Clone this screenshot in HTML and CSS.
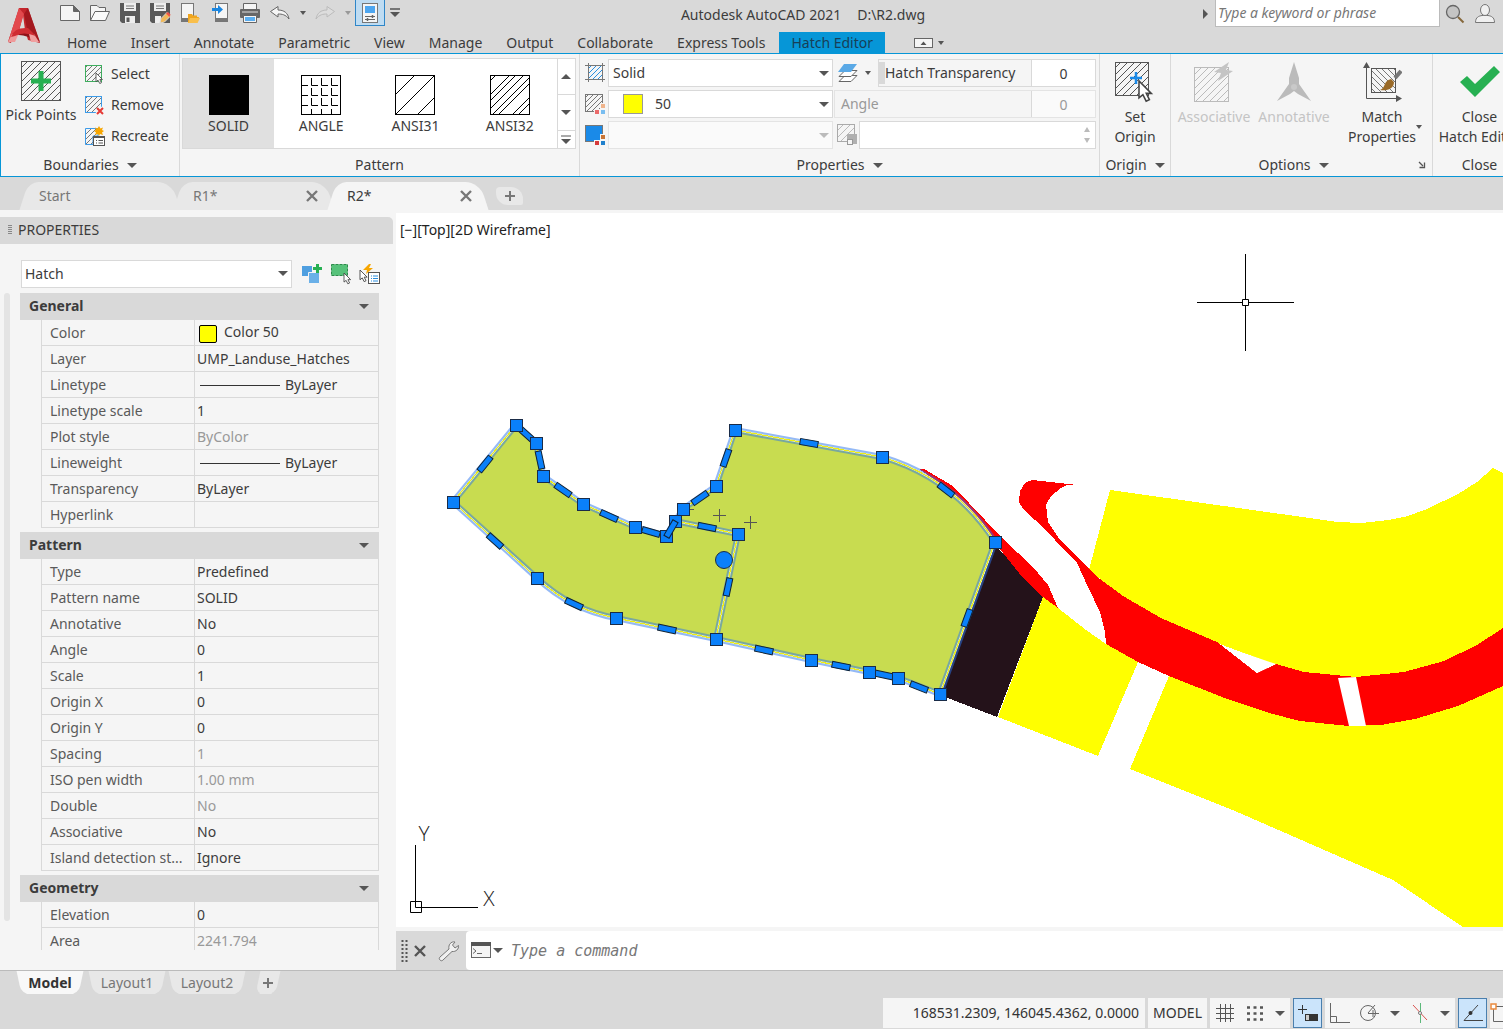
FILE: index.html
```html
<!DOCTYPE html>
<html lang="en">
<head>
<meta charset="utf-8">
<title>Autodesk AutoCAD 2021 - R2.dwg</title>
<link rel="stylesheet" href="styles.css">
</head>
<body>
<svg class="defs" width="0" height="0" aria-hidden="true">
  <defs>
    <pattern id="hatch" width="7" height="7" patternUnits="userSpaceOnUse"><path d="M-1 8L8-1M-1 1L1-1M6 8L8 6" stroke="#555" fill="none"/></pattern>
    <pattern id="hatch-fine" width="5" height="5" patternUnits="userSpaceOnUse"><path d="M-1 6L6-1M-1 1L1-1M4 6L6 4" stroke="#777" fill="none"/></pattern>
    <pattern id="hatch-blue" width="5" height="5" patternUnits="userSpaceOnUse"><path d="M-1 6L6-1M-1 1L1-1M4 6L6 4" stroke="#2a8fe0" fill="none"/></pattern>
    <pattern id="hatch-pale" width="7" height="7" patternUnits="userSpaceOnUse"><path d="M-1 8L8-1M-1 1L1-1M6 8L8 6" stroke="#bbb" fill="none"/></pattern>
    <pattern id="hatch-back" width="6" height="6" patternUnits="userSpaceOnUse"><path d="M-1-1L7 7M5-1L7 1M-1 5L1 7" stroke="#777" fill="none"/></pattern>
    <linearGradient id="red" x1="0" y1="0" x2="1" y2="1"><stop offset="0" stop-color="#e8474b"/><stop offset="1" stop-color="#a3151b"/></linearGradient>
    <path id="pointer" d="M0 0V13L3 10.500L5.500 15.500L8 14.300L5.600 9.500H9.500Z" fill="#fff" stroke="#444" stroke-width="1.200"/>
    <rect id="grip" x="-5.500" y="-5.500" width="12" height="12" fill="#0a80fa" stroke="#1a2c48"/>
    <rect id="bar" x="-9" y="-3" width="18" height="6" fill="#0a80fa" stroke="#123"/>
    <path id="outline" d="M516 425L536 443L543 476L583 504L635 527L666 536L675 521L683 509L716 486L735 430L882 457Q954 478 995 542L940 694L898 678L869 672L811 660L716 639L616 618Q571 610 537 578L453 502Z"/>
    <path id="divider" d="M675 521L738 534L716 639"/>
    <g id="edges"><use href="#outline"/><use href="#divider"/></g>
  </defs>
</svg>

<header class="header">
  <button class="logo" aria-label="Application menu">
    <svg width="34" height="37" viewBox="0 0 34 37"><path d="M12 1H21L33 36L21 33L18 23L16 8L12 24Q6 27 4 36L1 35Z" fill="#c3262c"/><path d="M12 1L1 35L5 27Q9 24 12 23L17 7Z" fill="#e2494d"/><path d="M17 7L21 1L33 35L26 29L20 22Z" fill="#a3181e"/><path d="M4 30Q14 22 27 27L31 35Q14 24 4 30Z" fill="#8f1218"/><path d="M5 27L1 35H8L12 26Z" fill="#ef9a9a"/><path d="M22 27L24 35H32L27 27Z" fill="#f0a0a0"/><path d="M4 30Q7 20 21 21L29 29Q16 24 8 29Z" fill="#cf2c32"/></svg>
  </button>
  <div class="titlebar">
    <div class="quick">
      <button class="qbtn" aria-label="New"><svg width="22" height="20" viewBox="0 0 22 20"><path d="M1.500 2.500H14.500L20.500 8.500V17.500H1.500Z" fill="#f5f5f5" stroke="#666"/><path d="M14.500 2.500V8.500H20.500Z" fill="#666" stroke="#666"/></svg></button>
      <button class="qbtn" aria-label="Open"><svg width="22" height="20" viewBox="0 0 22 20"><path d="M1.500 17.500V2.500H8L10 4.500H16.500V8" fill="#f5f5f5" stroke="#666"/><path d="M1.500 17.500L6 8.500H20.500L16.500 17.500Z" fill="#fafafa" stroke="#666"/></svg></button>
      <button class="qbtn" aria-label="Save"><svg width="22" height="22" viewBox="0 0 22 22"><path d="M1 1H21V21H3L1 19Z" fill="#595959"/><path d="M5 1H17V9H5Z" fill="#eee"/><path d="M7 4H15M7 6.500H15" stroke="#777"/><path d="M6 14H16V21H6Z" fill="#eee"/><path d="M7.500 15.500H10.500V20H7.500Z" fill="#595959"/></svg></button>
      <button class="qbtn" aria-label="Save as"><svg width="22" height="22" viewBox="0 0 22 22"><path d="M1 1H21V21H3L1 19Z" fill="#595959"/><path d="M5 1H17V9H5Z" fill="#eee"/><path d="M7 4H15M7 6.500H15" stroke="#777"/><path d="M6 14H12V21H6Z" fill="#eee"/><path d="M11 21L12 16.500L18 10.500L21.500 14L15.500 20Z" fill="#f0b95a" stroke="#d9d9d9"/><path d="M17 11.500L19 10L21.500 12.500L20.500 15Z" fill="#ee5548"/></svg></button>
      <button class="qbtn" aria-label="Open from web"><svg width="22" height="22" viewBox="0 0 22 22"><rect x="2.500" y="1.500" width="12" height="18" fill="#f5f5f5" stroke="#777"/><path d="M3 16H14V19.500H3Z" fill="#777"/><path d="M9 21V12H13L14 13.500H18V15H20L18 21Z" fill="#f0a51e"/><path d="M11 16H21L18.500 21H9Z" fill="#f9bf4c"/></svg></button>
      <button class="qbtn" aria-label="Save to web"><svg width="22" height="22" viewBox="0 0 22 22"><rect x="6.500" y="1.500" width="12" height="18" fill="#f5f5f5" stroke="#777"/><path d="M7 16H18V19.500H7Z" fill="#777"/><path d="M3 6H9V3L14 7.500L9 12V9H3Z" fill="#1a86e0"/></svg></button>
      <button class="qbtn" aria-label="Plot"><svg width="22" height="20" viewBox="0 0 22 20"><path d="M4.500 0.500H17.500V7H4.500Z" fill="#f5f5f5" stroke="#666"/><rect x="1" y="6" width="20" height="9" rx="1" fill="#666"/><path d="M3 9H19" stroke="#ddd"/><path d="M4.500 12.500H17.500V19.500H4.500Z" fill="#f5f5f5" stroke="#666"/><path d="M6 14H16V18H6Z" fill="#5aaef0"/></svg></button>
      <button class="qbtn" aria-label="Undo"><svg width="22" height="16" viewBox="0 0 22 16"><path d="M1.500 6.500L9 1.500V5C15 5 19 8 20 14C16.500 9.500 13 9 9 9V12Z" fill="#f5f5f5" stroke="#666"/></svg></button>
      <button class="qcaret" aria-label="Undo list"><i class="caret small"></i></button>
      <button class="qbtn" aria-label="Redo"><svg width="22" height="16" viewBox="0 0 22 16"><path d="M20.500 6.500L13 1.500V5C7 5 3 8 2 14C5.500 9.500 9 9 13 9V12Z" fill="#ddd" stroke="#bbb"/></svg></button>
      <button class="qcaret" aria-label="Redo list"><i class="caret small dim"></i></button>
      <button class="qbtn on" aria-label="Properties"><svg width="18" height="22" viewBox="0 0 18 22"><rect x="1.500" y="1.500" width="15" height="19" fill="#f5f5f5" stroke="#777"/><path d="M4 4H14V11H4Z" fill="#4da6f0"/><path d="M4 14.500H14M4 17.500H14" stroke="#666"/><path d="M11.500 13V16M6.500 16V19" stroke="#666" stroke-width="1.500"/></svg></button>
      <button class="qmore" aria-label="Customize toolbar"><svg width="12" height="10" viewBox="0 0 12 10"><path d="M1 1H11" stroke="#555" stroke-width="1.500"/><path d="M1 4H11L6 9Z" fill="#555"/></svg></button>
    </div>
    <h1 class="title"><span>Autodesk AutoCAD 2021</span><span>D:\R2.dwg</span></h1>
    <div class="help">
      <i class="caret right"></i>
      <input class="search" type="search" placeholder="Type a keyword or phrase" aria-label="Search help">
      <button class="hbtn" aria-label="Search"><svg width="20" height="20" viewBox="0 0 20 20"><path d="M13 13L18.500 18.500" stroke="#86683c" stroke-width="2"/><circle cx="8" cy="8" r="6.500" fill="#c4c4c4" stroke="#666" stroke-width="1.300"/></svg></button>
      <button class="hbtn" aria-label="Sign in"><svg width="22" height="20" viewBox="0 0 22 20"><path d="M1.500 18.500C1.500 13 5 12 8 11.500H14C17 12 20.500 13 20.500 18.500Z" fill="#f0f0f0" stroke="#777"/><ellipse cx="11" cy="6" rx="4.500" ry="5.500" fill="#f0f0f0" stroke="#777"/></svg></button>
    </div>
  </div>
  <nav class="tabs">
    <a href="#home">Home</a><a href="#insert">Insert</a><a href="#annotate">Annotate</a><a href="#parametric">Parametric</a><a href="#view">View</a><a href="#manage">Manage</a><a href="#output">Output</a><a href="#collaborate">Collaborate</a><a href="#express">Express Tools</a><a class="current" href="#hatch">Hatch Editor</a>
    <button class="mini" aria-label="Minimize ribbon"><svg width="30" height="12" viewBox="0 0 30 12"><rect x=".5" y="1.500" width="18" height="9" fill="#f5f5f5" stroke="#666"/><path d="M6.500 8L9.500 4.500L12.500 8ZM24 4H30L27 8Z" fill="#555"/></svg></button>
  </nav>
</header>

<main class="ribbon">
  <section class="panel boundaries">
    <div class="body">
      <button class="big"><svg width="40" height="40" viewBox="0 0 40 40"><rect x=".5" y=".5" width="39" height="39" fill="url(#hatch)" stroke="#555"/><path d="M20 10V30M10 20H30" stroke="#27b052" stroke-width="5"/></svg><span>Pick Points</span></button>
      <div class="stack">
        <button><svg width="22" height="20" viewBox="0 0 22 20"><rect x="1.500" y="1.500" width="16" height="16" fill="url(#hatch-fine)" stroke="#3fae5f"/><use href="#pointer" transform="translate(12 9) scale(.68)"/></svg>Select</button>
        <button><svg width="22" height="20" viewBox="0 0 22 20"><rect x="1.500" y="1.500" width="16" height="16" fill="url(#hatch-fine)" stroke="#3d9be8"/><path d="M13 13L19 19M19 13L13 19" stroke="#f5f5f5" stroke-width="4"/><path d="M13 13L19 19M19 13L13 19" stroke="#e53935" stroke-width="2"/></svg>Remove</button>
        <button><svg width="22" height="20" viewBox="0 0 22 20"><path d="M1.500 18.500V2.500H14V10H9V18.500Z" fill="url(#hatch-fine)" stroke="#3d9be8"/><path d="M15 0L16.500 2.500L19 1.500L18 4L20 5L18 6.500L19 9L16 8L15 10L14 8L11 9L12 6.500L10 5L12 4L11 1.500L13.500 2.500Z" fill="#f7a600"/><rect x="9.500" y="10.500" width="11" height="9" fill="#fff" stroke="#555"/><path d="M9 11.500H21M12 14.500H13M14.500 14.500H19M12 17H13M14.500 17H19" stroke="#555"/></svg>Recreate</button>
      </div>
    </div>
    <h2>Boundaries <i class="caret"></i></h2>
  </section>

  <section class="panel pattern">
    <div class="gallery">
      <button class="cell picked"><svg width="40" height="40"><rect width="40" height="40"/></svg>SOLID</button>
      <button class="cell"><svg width="40" height="40" viewBox="0 0 40 40"><rect x=".5" y=".5" width="39" height="39" fill="#fff" stroke="#000"/><path d="M0 10.500H7M10.500 3V10.500H17M20.500 3V10.500H27M30.500 3V10.500H37M0 20.500H7M10.500 13V20.500H17M20.500 13V20.500H27M30.500 13V20.500H37M0 30.500H7M10.500 23V30.500H17M20.500 23V30.500H27M30.500 23V30.500H37M10.500 34V40M20.500 34V40M30.500 34V40" fill="none" stroke="#000"/></svg>ANGLE</button>
      <button class="cell"><svg width="40" height="40" viewBox="0 0 40 40"><rect x=".5" y=".5" width="39" height="39" fill="#fff" stroke="#000"/><path d="M0 20L20 0M0 40L40 0M22 40L40 22" stroke="#000"/></svg>ANSI31</button>
      <button class="cell"><svg width="40" height="40" viewBox="0 0 40 40"><rect x=".5" y=".5" width="39" height="39" fill="#fff" stroke="#000"/><path d="M0 6L6 0M0 20L20 0M0 26L26 0M0 34L34 0M2 40L40 2M8 40L40 8M22 40L40 22M28 40L40 28" stroke="#000"/></svg>ANSI32</button>
      <div class="scroller">
        <button aria-label="Scroll up"><i class="caret up"></i></button>
        <button aria-label="Scroll down"><i class="caret"></i></button>
        <button aria-label="More patterns"><svg width="12" height="9" viewBox="0 0 12 9"><path d="M1 1H11" stroke="#555"/><path d="M1 4H11L6 9Z" fill="#555"/></svg></button>
      </div>
    </div>
    <h2>Pattern</h2>
  </section>

  <section class="panel props">
    <div class="fields">
      <svg width="22" height="22" viewBox="0 0 22 22"><rect x="4" y="4" width="14" height="14" fill="url(#hatch-blue)"/><path d="M0 3.500H20M0 17.500H20M3.500 1V20M17.500 1V20" stroke="#777"/></svg>
      <span class="combo"><select aria-label="Hatch type"><option>Solid</option></select></span>
      <div class="wide">
        <button class="layers" aria-label="Hatch layer"><svg width="22" height="20" viewBox="0 0 22 20"><path d="M2 18.500L8 12.500H20L14 18.500Z" fill="#fff" stroke="#666"/><path d="M2 13.500L8 7.500H20L14 13.500Z" fill="#fff" stroke="#666"/><path d="M1 9L7 1H20L14 9Z" fill="#5aa9e6"/></svg><i class="caret small"></i></button>
        <label class="slider"><i class="thumb"></i><span>Hatch Transparency</span><input value="0"></label>
      </div>
      <svg width="22" height="22" viewBox="0 0 22 22"><rect x=".5" y="1.500" width="17" height="17" fill="url(#hatch-fine)" stroke="#777"/><path d="M15 10H21V16H15ZM9 16H21V22H9Z" fill="#f5f5f5"/><path d="M16 11H20V15H16Z" fill="#f0b48c"/><path d="M10 17H14V21H10Z" fill="#ea6a6a"/><path d="M16 17H20V21H16Z" fill="#78bdf0"/></svg>
      <span class="combo"><i class="swatch"></i><select aria-label="Hatch color"><option>50</option></select></span>
      <label class="slider off"><span>Angle</span><input value="0" disabled></label>
      <svg width="22" height="22" viewBox="0 0 22 22"><rect x=".5" y="1.500" width="17" height="16" fill="#1a8ae8" stroke="#777"/><path d="M15 10H21V16H15ZM9 16H21V22H9Z" fill="#f5f5f5"/><path d="M16 11H20V15H16Z" fill="#c87434"/><path d="M10 17H14V21H10Z" fill="#d63a3a"/><path d="M16 17H20V21H16Z" fill="#1f80cc"/></svg>
      <span class="combo off"><select aria-label="Background color" disabled><option></option></select></span>
      <div class="wide">
        <svg width="22" height="22" viewBox="0 0 22 22"><rect x=".5" y=".5" width="17" height="17" fill="url(#hatch-pale)" stroke="#aaa"/><path d="M10 10H20V20H10Z" fill="#b0b0b0"/><rect x="10.500" y="15.500" width="5" height="5" fill="#f5f5f5" stroke="#999"/></svg>
        <span class="spin"><input aria-label="Hatch scale" disabled><span class="arrows"><i class="caret up tiny"></i><i class="caret tiny"></i></span></span>
      </div>
    </div>
    <h2>Properties <i class="caret"></i></h2>
  </section>

  <section class="panel origin">
    <div class="body">
      <button class="big"><svg width="40" height="42" viewBox="0 0 40 42"><rect x=".5" y="1.500" width="33" height="33" fill="url(#hatch)" stroke="#555"/><path d="M21 11V23M15 17H27" stroke="#1a8ae8" stroke-width="2.500"/><use href="#pointer" transform="translate(24 20) scale(1.300)"/></svg><span>Set<br>Origin</span></button>
    </div>
    <h2>Origin <i class="caret"></i></h2>
  </section>

  <section class="panel options">
    <div class="body">
      <button class="big" disabled><svg width="40" height="42" viewBox="0 0 40 42"><rect x=".5" y="6.500" width="34" height="34" fill="url(#hatch-pale)" stroke="#bbb"/><path d="M35 1L20 11L27 12L24 20L39 10L32 9Z" fill="#c4c4c4"/></svg><span>Associative</span></button>
      <button class="big" disabled><svg width="40" height="42" viewBox="0 0 40 42"><path d="M20 1L25 17V23L37 40L24 33L20 30L16 33L3 40L15 23V17Z" fill="#bbb"/><circle cx="20" cy="26" r="3" fill="#c9c9c9"/></svg><span>Annotative</span></button>
      <button class="big"><svg width="40" height="42" viewBox="0 0 40 42"><path d="M4.500 4V37.500H36" fill="none" stroke="#555"/><path d="M1 7L4.500 1L8 7ZM34 34L40 37.500L34 41Z" fill="#555"/><rect x="9.500" y="7.500" width="24" height="24" fill="url(#hatch-back)" stroke="#555"/><path d="M39 10L33 17" stroke="#777" stroke-width="4"/><path d="M18 29C24 27 21 20 29 18L32 21C32 28 25 30 18 29Z" fill="#9a6a28"/></svg><span>Match<br>Properties</span><i class="caret small"></i></button>
    </div>
    <h2>Options <i class="caret"></i></h2>
    <button class="launcher" aria-label="Hatch settings"><svg width="8" height="8" viewBox="0 0 8 8"><path d="M1 1L5 5M6.500 1.500V6.500H1.500" fill="none" stroke="#555" stroke-width="1.300"/></svg></button>
  </section>

  <section class="panel close">
    <div class="body">
      <button class="big"><svg width="40" height="42" viewBox="0 0 40 42"><path d="M0 21L7 15L15 23L34 5L40 11L15 36Z" fill="#27b052"/></svg><span>Close<br>Hatch Editor</span></button>
    </div>
    <h2>Close</h2>
  </section>
</main>

<nav class="files">
  <a class="file" href="#start">Start</a>
  <a class="file" href="#r1">R1*<svg class="x" width="12" height="12" viewBox="0 0 12 12"><path d="M1 1L11 11M11 1L1 11" stroke="#777" stroke-width="2.400"/></svg></a>
  <a class="file current" href="#r2">R2*<svg class="x" width="12" height="12" viewBox="0 0 12 12"><path d="M1 1L11 11M11 1L1 11" stroke="#777" stroke-width="2.400"/></svg></a>
  <button class="add" aria-label="New drawing"><svg width="12" height="12" viewBox="0 0 12 12"><path d="M6 1V11M1 6H11" stroke="#777" stroke-width="2"/></svg></button>
</nav>

<div class="work">
  <aside class="palette">
    <h2 class="palette-title"><i class="grain"></i>PROPERTIES</h2>
    <div class="picker">
      <span class="combo"><select aria-label="Object type"><option>Hatch</option></select></span>
      <button aria-label="Toggle PICKADD"><svg width="22" height="22" viewBox="0 0 22 22"><path d="M1 3H11V13H1Z" fill="#4f9fe0"/><path d="M7.500 9.500H18.500V20.500H7.500Z" fill="#6ab0e8" stroke="#f5f5f5"/><path d="M16.500 1V10M12 5.500H21" stroke="#27b052" stroke-width="3"/></svg></button>
      <button aria-label="Select objects"><svg width="22" height="22" viewBox="0 0 22 22"><path d="M1.500 1.500H17.500V12.500H1.500Z" fill="#57c27a" stroke="#2c8c4a" stroke-dasharray="3 1"/><use href="#pointer" transform="translate(14 10) scale(.7)"/></svg></button>
      <button aria-label="Quick select"><svg width="22" height="22" viewBox="0 0 22 22"><path d="M10 1L4 7L8 7L7 11L14 5L10 5L12 1Z" fill="#f7a600"/><use href="#pointer" transform="translate(1 7) scale(.75)"/><rect x="9.500" y="9.500" width="11" height="11" fill="#fff" stroke="#555"/><path d="M12 13H13M14 13H19M12 15.500H13M14 15.500H19M12 18H13M14 18H19" stroke="#2a8fe0"/></svg></button>
    </div>
    <div class="list">
      <i class="track"></i>
      <div class="groups">
        <section>
          <h3>General <i class="caret"></i></h3>
          <table>
            <tr><th>Color</th><td><i class="chip"></i>Color 50</td></tr>
            <tr><th>Layer</th><td>UMP_Landuse_Hatches</td></tr>
            <tr><th>Linetype</th><td><i class="rule"></i>ByLayer</td></tr>
            <tr><th>Linetype scale</th><td>1</td></tr>
            <tr><th>Plot style</th><td class="dim">ByColor</td></tr>
            <tr><th>Lineweight</th><td><i class="rule"></i>ByLayer</td></tr>
            <tr><th>Transparency</th><td>ByLayer</td></tr>
            <tr><th>Hyperlink</th><td></td></tr>
          </table>
        </section>
        <section>
          <h3>Pattern <i class="caret"></i></h3>
          <table>
            <tr><th>Type</th><td>Predefined</td></tr>
            <tr><th>Pattern name</th><td>SOLID</td></tr>
            <tr><th>Annotative</th><td>No</td></tr>
            <tr><th>Angle</th><td>0</td></tr>
            <tr><th>Scale</th><td>1</td></tr>
            <tr><th>Origin X</th><td>0</td></tr>
            <tr><th>Origin Y</th><td>0</td></tr>
            <tr><th>Spacing</th><td class="dim">1</td></tr>
            <tr><th>ISO pen width</th><td class="dim">1.00 mm</td></tr>
            <tr><th>Double</th><td class="dim">No</td></tr>
            <tr><th>Associative</th><td>No</td></tr>
            <tr><th>Island detection st...</th><td>Ignore</td></tr>
          </table>
        </section>
        <section>
          <h3>Geometry <i class="caret"></i></h3>
          <table>
            <tr><th>Elevation</th><td>0</td></tr>
            <tr><th>Area</th><td class="dim">2241.794</td></tr>
          </table>
        </section>
      </div>
    </div>
  </aside>

  <div class="stage">
    <div class="canvas">
      <svg class="drawing" width="100%" height="100%">
        <g transform="translate(-396 -213)">
          <g fill="#ff0" shape-rendering="crispEdges">
            <path d="M1043 597L998 717L1098 756L1138 662L1106 644L1086 630L1058 608Z"/>
            <path d="M1110 490L1338 522L1361 523L1388 520L1408 516L1427 509L1458 494L1477 482L1493 468L1503 473V630L1477 646L1444 662L1404 673L1356 678L1304 673L1276 665L1217 643L1161 619L1123 597L1089 570Z"/>
            <path d="M1169 676L1227 699L1349 725L1415 719L1503 686V927H1463L1393 880L1235 811L1130 769Z"/>
          </g>
          <path d="M995 545L940 695L997 717L1043 597Z" fill="#24121a" shape-rendering="crispEdges"/>
          <g fill="#f00" shape-rendering="crispEdges">
            <path d="M919 469L924 469L953 486L1002 538L1033 567L1048 585L1058 608L1043 597L1023 578L999 548L988 531L973 513L954 493Z"/>
            <path d="M1077 485L1032 480L1025 483L1020 491L1019 502L1023 509L1046 530L1065 551L1077 563L1088 587L1100 612L1105 632L1106 644L1138 662L1169 676L1227 699L1273 714L1300 721L1349 726L1381 725L1415 719L1458 706L1503 686V628L1477 645L1444 661L1404 672L1356 677L1304 672L1276 664L1257 673L1217 642L1161 618L1123 596L1096 576L1077 557L1058 537L1048 522L1046 505L1051 496L1061 488L1067 485Z"/>
          </g>
          <path d="M1223 646L1276 664L1257 673ZM1338 678L1356 677L1366 726H1349Z" fill="#fff"/>
          <use href="#outline" fill="#c8dc50"/>
          <g fill="none">
            <use href="#edges" stroke="#2a74ee" stroke-opacity=".5" stroke-width="6"/>
            <use href="#edges" stroke="#dfeac0" stroke-width="2"/>
            <use href="#edges" stroke="#eeee10" shape-rendering="crispEdges"/>
          </g>
          <path d="M713 515.500H726M719.500 509V522M744 522.500H757M750.500 516V529M687 509.500H694" stroke="#555"/>
          <g>
            <use href="#bar" transform="translate(485 464) rotate(-51)"/><use href="#bar" transform="translate(495 541) rotate(42)"/>
            <use href="#bar" transform="translate(574 604) rotate(25)"/><use href="#bar" transform="translate(667 629) rotate(12)"/>
            <use href="#bar" transform="translate(764 650) rotate(12)"/><use href="#bar" transform="translate(841 666) rotate(11)"/>
            <use href="#bar" transform="translate(884 675) rotate(12)"/><use href="#bar" transform="translate(919 687) rotate(21)"/>
            <use href="#bar" transform="translate(967 618) rotate(-70)"/><use href="#bar" transform="translate(946 490) rotate(38)"/>
            <use href="#bar" transform="translate(809 443) rotate(10)"/><use href="#bar" transform="translate(726 458) rotate(-71)"/>
            <use href="#bar" transform="translate(700 498) rotate(-35)"/><use href="#bar" transform="translate(651 532) rotate(16)"/>
            <use href="#bar" transform="translate(609 516) rotate(24)"/><use href="#bar" transform="translate(563 490) rotate(35)"/>
            <use href="#bar" transform="translate(540 460) rotate(78)"/><use href="#bar" transform="translate(526 434) rotate(42)"/>
            <use href="#bar" transform="translate(707 527) rotate(11)"/><use href="#bar" transform="translate(728 587) rotate(-78)"/>
          </g>
          <g shape-rendering="crispEdges">
            <use href="#grip" x="516" y="425"/><use href="#grip" x="536" y="443"/><use href="#grip" x="543" y="476"/><use href="#grip" x="583" y="504"/>
            <use href="#grip" x="635" y="527"/><use href="#grip" x="666" y="536"/><use href="#grip" x="675" y="521"/><use href="#grip" x="683" y="509"/>
            <use href="#grip" x="716" y="486"/><use href="#grip" x="735" y="430"/><use href="#grip" x="882" y="457"/><use href="#grip" x="995" y="542"/>
            <use href="#grip" x="940" y="694"/><use href="#grip" x="898" y="678"/><use href="#grip" x="869" y="672"/><use href="#grip" x="811" y="660"/>
            <use href="#grip" x="716" y="639"/><use href="#grip" x="616" y="618"/><use href="#grip" x="537" y="578"/><use href="#grip" x="453" y="502"/>
            <use href="#grip" x="738" y="534"/>
          </g>
          <use href="#bar" transform="translate(671 529) rotate(-60)"/>
          <circle cx="724" cy="560" r="8.500" fill="#0a80fa" stroke="#1a2c48"/>
          <path d="M1197 302.500H1242M1249 302.500H1294M1245.500 254V299M1245.500 306V351M1242.500 299.500H1248.500V305.500H1242.500Z" fill="none" stroke="#000"/>
          <path d="M415.500 845V907.500H478M410.500 901.500H421.500V912.500H410.500Z" fill="none" stroke="#000"/>
          <text class="axis" x="424" y="841">Y</text>
          <text class="axis" x="489" y="906">X</text>
        </g>
      </svg>
      <span class="viewlabel">[−][Top][2D Wireframe]</span>
    </div>
    <div class="command">
      <div class="cmdtools">
        <svg width="7" height="22" viewBox="0 0 7 22"><path d="M1.500 0V22M5.500 0V22" stroke="#555" stroke-width="2" stroke-dasharray="2 2"/></svg>
        <button aria-label="Close command line"><svg width="12" height="12" viewBox="0 0 12 12"><path d="M1 1L11 11M11 1L1 11" stroke="#555" stroke-width="2.400"/></svg></button>
        <button aria-label="Customize"><svg width="22" height="22" viewBox="0 0 22 22"><path d="M2 20C1 19 1 18 2 17L11 9C10 5 13 1 17 2L14.500 5L17 8L20.500 5.500C21 9 18 12 14 11.500L5 20C4 21 3 21 2 20Z" fill="#f0f0f0" stroke="#777"/></svg></button>
      </div>
      <label class="prompt">
        <svg width="20" height="17" viewBox="0 0 20 17"><rect x=".5" y=".5" width="19" height="15" fill="#f5f5f5" stroke="#666"/><path d="M0 0H20V4H0Z" fill="#555"/><path d="M2 6.500L5 9L2 11.500M6 11.500H11" fill="none" stroke="#666"/></svg>
        <i class="caret"></i>
        <input placeholder="Type a command" aria-label="Command">
      </label>
    </div>
  </div>
</div>

<footer class="footer">
  <nav class="layouts">
    <a class="layout current" href="#model">Model</a><a class="layout" href="#layout1">Layout1</a><a class="layout" href="#layout2">Layout2</a>
    <button class="layout plus" aria-label="New layout"><svg width="10" height="10" viewBox="0 0 10 10"><path d="M5 0V10M0 5H10" stroke="#777" stroke-width="2"/></svg></button>
  </nav>
  <div class="status">
    <span class="coords">168531.2309, 146045.4362, 0.0000</span>
    <button class="space">MODEL</button>
    <div class="toggles">
      <button aria-label="Grid"><svg width="20" height="20" viewBox="0 0 20 20"><path d="M5.500 1V19M10.500 1V19M15.500 1V19M1 5.500H19M1 10.500H19M1 15.500H19" stroke="#555"/></svg></button>
      <button aria-label="Snap"><svg width="16" height="16" viewBox="0 0 16 16"><path d="M0 2.500H16M0 8.500H16M0 14.500H16" stroke="#555" stroke-width="2.500" stroke-dasharray="3 3.500"/></svg></button>
      <button class="narrow" aria-label="Snap settings"><i class="caret"></i></button>
    </div>
    <button class="lit" aria-label="Dynamic input"><svg width="22" height="20" viewBox="0 0 22 20"><path d="M5.500 2V11M1 6.500H10" stroke="#333"/><rect x="8.500" y="11.500" width="12" height="6" fill="#333" stroke="#333"/><path d="M9 12H12V17H9Z" fill="#ccc"/></svg></button>
    <div class="toggles">
      <button aria-label="Ortho"><svg width="20" height="20" viewBox="0 0 20 20"><path d="M.5 0V19.500H20M.500 13.500H6.500V19" fill="none" stroke="#666"/></svg></button>
      <button aria-label="Polar tracking"><svg width="22" height="20" viewBox="0 0 22 20"><circle cx="9" cy="10" r="7.500" fill="none" stroke="#666"/><path d="M9 10.500H20M9 10L16 2M14 7V14" stroke="#666"/></svg></button>
      <button class="narrow" aria-label="Polar settings"><i class="caret"></i></button>
      <button aria-label="Isometric drafting"><svg width="20" height="20" viewBox="0 0 20 20"><path d="M3 2L17 17" stroke="#d9534f"/><path d="M10.500 0V20" stroke="#5cb87a"/><circle cx="10" cy="10" r="1.500" fill="#fff" stroke="#777"/></svg></button>
      <button class="narrow" aria-label="Isometric settings"><i class="caret"></i></button>
    </div>
    <button class="lit" aria-label="Object snap tracking"><svg width="22" height="20" viewBox="0 0 22 20"><path d="M16 2L2 17.500H21" fill="none" stroke="#444"/><circle cx="8.500" cy="10" r="2" fill="#333"/></svg></button>
    <button class="last" aria-label="Object snap"><svg width="20" height="20" viewBox="0 0 20 20"><path d="M3.500 6V18.500H20M6 3.500H20" fill="none" stroke="#666"/><rect x="1" y="1" width="5" height="5" fill="#fff" stroke="#ea8a3e" stroke-width="1.500"/></svg></button>
  </div>
</footer>
</body>
</html>
```
FILE: styles.css
```css
* { box-sizing: border-box; }
body {
  margin: 0;
  min-height: 100vh;
  display: flex;
  flex-direction: column;
  overflow: hidden;
  background: #d9d9d9;
  color: #3c3c3c;
  font: 14px/20px "Noto Sans", "Open Sans", sans-serif;
}
.defs { position: absolute; }
svg { flex: none; display: block; }
button, input, select { font: inherit; color: inherit; background: none; border: 0; margin: 0; padding: 0; border-radius: 0; }
button { display: flex; align-items: center; justify-content: center; }
input, select { min-width: 0; outline: 0; appearance: none; }
a { color: inherit; text-decoration: none; }
h1, h2, h3 { margin: 0; font: inherit; }
select:disabled { opacity: 1; }

/* little triangles */
.caret { flex: none; width: 0; height: 0; border-style: solid; border-width: 5px 5px 0; border-color: #555 transparent transparent; }
.caret.small { border-width: 4px 3px 0; }
.caret.tiny { border-width: 5px 3px 0; border-top-color: #bbb; }
.caret.up { border-width: 0 5px 5px; border-color: transparent transparent #555; }
.caret.up.tiny { border-width: 0 3px 5px; border-bottom-color: #bbb; }
.caret.right { border-width: 5px 0 5px 5px; border-color: transparent transparent transparent #555; }
.caret.dim { border-top-color: #999; }

/* title bar and ribbon tabs */
.header { display: grid; grid-template: 28px 25px / 55px minmax(0, 1fr); }
.logo { grid-row: 1 / 3; padding: 0 7px 3px 0; }
.titlebar { display: flex; }
.quick { display: flex; height: 26px; }
.qbtn { width: 30px; }
.qcaret { width: 15px; }
.qmore { width: 20px; }
.qbtn.on { background: #bfdcf2; border: 1px solid #2f86c8; border-top: 0; }
.title { flex: 1; display: flex; justify-content: center; gap: 16px; padding: 5px 2px 0 0; white-space: nowrap; }
.help { display: flex; align-items: center; width: 300px; height: 27px; }
.help .caret { margin-right: 7px; }
.search { width: 225px; height: 27px; background: #fff; border: 1px solid #bbb; border-top: 0; padding: 0 3px 2px 2px; font-style: italic; }
.search::placeholder { color: #777; opacity: 1; }
.hbtn { width: 30px; }
.tabs { display: flex; align-items: flex-end; }
.tabs a { padding: 1px 12px 0; height: 21px; white-space: nowrap; }
.tabs .current { background: #0696d7; color: #173f57; padding: 1px 12px 0; margin-left: 2px; }
.mini { height: 21px; margin-left: 29px; }

/* ribbon */
.ribbon { display: flex; height: 124px; background: #f5f5f5; border: solid #0696d7; border-width: 1px 0 1px 1px; overflow: hidden; }
.panel { flex: none; display: flex; flex-direction: column; position: relative; border-right: 1px solid #d9d9d9; }
.panel h2 { margin-top: auto; height: 22px; display: flex; align-items: center; justify-content: center; gap: 8px; }
.boundaries { width: 179px; }
.pattern { width: 400px; }
.props { width: 520px; }
.origin { width: 71px; }
.options { width: 262px; }
.close { width: 94px; }
.body { display: flex; justify-content: center; }
.big { flex-direction: column; width: 80px; height: 92px; justify-content: flex-start; padding-top: 7px; gap: 4px; white-space: nowrap; position: relative; }
.big:disabled { color: #c4c4c4; }
.big .caret { position: absolute; right: 0; bottom: 17px; }
.options .body { justify-content: flex-start; padding-left: 3px; }
.options .big:last-child { margin-left: 8px; }
.options h2 { padding-right: 16px; }
.stack { flex: 1; padding: 4px 0 0 3px; }
.stack button { height: 31px; gap: 5px; }
.launcher { position: absolute; right: 6px; bottom: 7px; }

.gallery { display: flex; height: 91px; margin: 4px 3px 0 2px; background: #fff; border: 1px solid #d9d9d9; }
.cell { flex: 1 1 0; flex-direction: column; gap: 1px; padding-top: 3px; }
.cell.picked { flex: 0 0 91px; background: #e0e0e0; }
.scroller { width: 18px; display: grid; grid-template-rows: 35px 36px 1fr; border-left: 1px solid #d9d9d9; }
.scroller button + button { border-top: 1px solid #d9d9d9; }

.fields { display: grid; grid-template: repeat(3, 28px) / 22px 225px minmax(0, 1fr); gap: 3px 1px; padding: 5px 3px 0 5px; align-items: center; }
.combo { height: 28px; display: flex; align-items: center; background: #fff; border: 1px solid #d9d9d9; position: relative; }
.combo select { flex: 1; height: 100%; padding: 0 4px; }
.combo::after { content: ""; position: absolute; right: 3px; border: 5px solid transparent; border-top-color: #555; border-bottom: 0; pointer-events: none; }
.combo.off { background: #fafafa; border-color: #e4e4e4; }
.combo.off::after { border-top-color: #bbb; }
.swatch { width: 20px; height: 20px; margin: 0 8px 0 14px; background: #ff0; border: 1px solid #999; }
.wide { display: flex; align-items: center; gap: 2px; padding-left: 3px; }
.wide > svg { margin-right: -2px; }
.layers { gap: 6px; margin-right: 5px; }
.slider { flex: 1; display: flex; align-items: center; height: 28px; border: 1px solid #d9d9d9; white-space: nowrap; }
.slider span { flex: 1; }
.slider input { width: 64px; height: 100%; text-align: center; background: #fff; border-left: 1px solid #d9d9d9; }
.thumb { width: 6px; height: 22px; background: #d9d9d9; }
.slider.off { color: #999; border-color: #e4e4e4; padding-left: 6px; }
.slider.off input { background: #fafafa; }
.spin { flex: 1; display: flex; height: 28px; background: #fff; border: 1px solid #d9d9d9; }
.spin input { flex: 1; }
.arrows { display: flex; flex-direction: column; justify-content: center; gap: 6px; padding-right: 5px; }

/* drawing tabs */
.files { height: 33px; display: flex; align-items: flex-end; padding-left: 22px; color: #777; }
.file { position: relative; z-index: 0; display: flex; align-items: center; justify-content: space-between; width: 154px; height: 28px; padding: 0 12px 0 17px; }
.file::before, .file::after { content: ""; position: absolute; z-index: -1; top: 0; bottom: 0; background: #e8e8e8; }
.file::before { left: 2px; right: 30px; border-top-left-radius: 10px; transform: skewX(-18deg); }
.file::after { left: 30px; right: 0; border-top-right-radius: 14px; transform: skewX(18deg); }
.file.current { color: #3c3c3c; }
.file.current::before, .file.current::after { background: #f5f5f5; }
.add { width: 27px; height: 18px; margin: 0 0 5px 12px; background: #e8e8e8; border-radius: 4px 12px 2px 12px; }

/* work area */
.work { flex: 1; min-height: 0; display: flex; background: #f5f5f5; border-bottom: 1px solid #bbb; }
.palette { width: 396px; flex: none; display: flex; flex-direction: column; padding: 7px 3px 0 0; }
.palette-title { display: flex; align-items: center; height: 27px; gap: 6px; padding: 0 0 2px 8px; background: #d9d9d9; border-top-right-radius: 5px; }
.grain { width: 4px; height: 10px; background: repeating-linear-gradient(#888 0 1px, transparent 1px 2px); }
.picker { display: flex; align-items: center; gap: 7px; padding: 15px 12px 5px 21px; height: 49px; }
.picker .combo { flex: 1; margin-right: 2px; }
.picker select { padding-left: 3px; }
.list { flex: 1 1 0; min-height: 0; display: flex; overflow: hidden; margin-bottom: 20px; }
.track { width: 6px; margin: 0 10px 29px 4px; border-radius: 3px; background: #e4e4e4; }
.groups { flex: 1; padding-right: 14px; }
.groups section { margin-bottom: 4px; }
.groups h3 { display: flex; align-items: center; justify-content: space-between; height: 27px; padding: 0 10px 1px 9px; background: #d9d9d9; font-weight: bold; }
.groups table { width: 338px; margin-left: auto; border-collapse: separate; border-spacing: 0; table-layout: fixed; }
.groups th, .groups td { height: 26px; padding: 0; border: solid #d9d9d9; border-width: 0 1px 1px 0; text-align: left; font-weight: normal; white-space: nowrap; }
.groups th { width: 154px; padding-left: 8px; border-left-width: 1px; color: #5a5a5a; }
.groups td { padding-left: 2px; }
.groups td.dim { color: #999; }
.chip { display: inline-block; width: 18px; height: 18px; margin: 0 7px 0 2px; border: 1px solid #000; border-radius: 2px; background: #ff0; vertical-align: middle; }
.rule { display: inline-block; width: 80px; margin: 0 5px 0 3px; border-top: 1px solid #333; vertical-align: middle; }

.stage { flex: 1; min-width: 0; display: flex; flex-direction: column; }
.canvas { flex: 1; position: relative; margin-top: 3px; background: #fff; overflow: hidden; }
.drawing { position: absolute; inset: 0; }
.axis { font-size: 21px; font-weight: 300; text-anchor: middle; font-family: "Open Sans", sans-serif; fill: #222; }
.viewlabel { position: absolute; left: 4px; top: 7px; color: #222; }
.command { display: flex; height: 39px; margin-top: 4px; background: #d9d9d9; }
.cmdtools { display: flex; align-items: center; width: 70px; padding-left: 5px; gap: 6px; }
.cmdtools button + button { margin-left: 6px; }
.prompt { flex: 1; display: flex; align-items: center; padding-left: 5px; gap: 2px; background: #fff; border-radius: 4px 0 0 4px; }
.prompt input { flex: 1; margin-left: 6px; font: italic 15px/20px "DejaVu Sans Mono", monospace; }
.prompt input::placeholder { color: #777; opacity: 1; }

/* layout tabs and status bar */
.footer { flex: none; height: 58px; display: flex; flex-direction: column; justify-content: space-between; }
.layouts { display: flex; padding-left: 15px; color: #777; }
.layout { position: relative; z-index: 0; display: flex; justify-content: center; align-items: center; height: 23px; width: 80px; }
.layout::before, .layout::after { content: ""; position: absolute; z-index: -1; top: 0; bottom: 0; background: #e8e8e8; }
.layout::before { left: 4px; right: 14px; border-bottom-left-radius: 8px; transform: skewX(12deg); }
.layout::after { left: 14px; right: 4px; border-bottom-right-radius: 8px; transform: skewX(-12deg); }
.layout.current { width: 70px; margin-right: 2px; color: #333; font-weight: bold; }
.layout.current::before, .layout.current::after { background: #f8f8f8; }
.layout.plus { width: 28px; margin-left: 7px; }
.layout.plus::before { right: 8px; transform: skewX(-12deg); }
.layout.plus::after { left: 8px; }
.status { display: flex; justify-content: flex-end; gap: 3px; height: 31px; padding-bottom: 1px; }
.status > * { flex: none; background: #f5f5f5; }
.coords { width: 262px; padding: 5px 6px 0 0; text-align: right; color: #333; }
.space { width: 59px; color: #333; }
.toggles { display: flex; }
.toggles button { width: 30px; }
.toggles .narrow { width: 20px; }
.status .lit { width: 29px; background: #cbe4fb; border: 1px solid #4a7fae; }
.last { width: 13px; justify-content: flex-start; overflow: hidden; }
```
